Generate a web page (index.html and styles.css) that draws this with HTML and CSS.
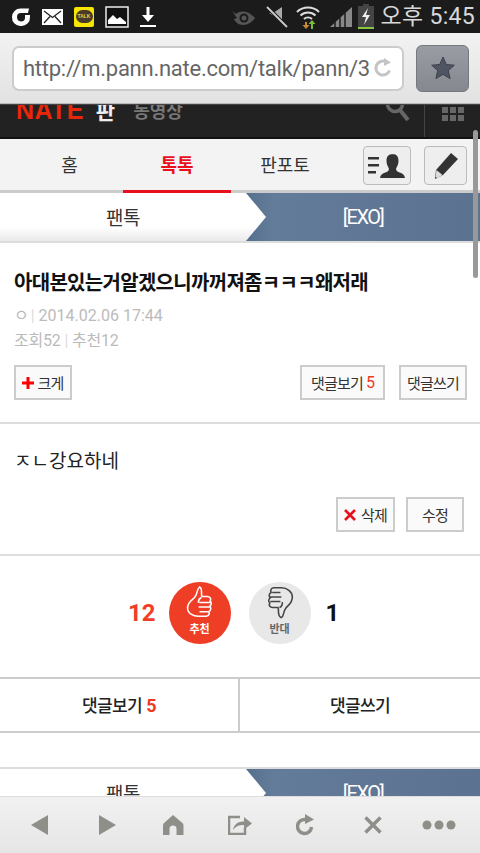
FILE: index.html
```html
<!DOCTYPE html>
<html lang="ko">

<head>
  <meta charset="UTF-8">
  <meta name="viewport" content="width=device-width, initial-scale=1.0">
  <title>네이트 판</title>
  <link rel="stylesheet" href="styles.css">
</head>

<body>
  <div class="status-bar">
    <div class="status-left">
      <svg width="20" height="20" viewBox="0 0 20 20"><path d="M18 1.500H9.500A8.500 8.500 0 0 0 1 10 8.500 8.500 0 0 0 10 19 8.500 8.500 0 0 0 19 10V8h-5v2.500A4 4 0 0 1 10 14.500 4.500 4.500 0 0 1 6 10 4 4 0 0 1 10 6h7Z" fill="#fff"/></svg>
      <svg width="21" height="16" viewBox="0 0 21 16"><rect width="21" height="16" fill="#fff"/><path d="M2 2l8.500 6.500L19 2M2 14l6-6.500M19 14l-6-6.500" fill="none" stroke="#222" stroke-width="1.300"/></svg>
      <div class="talk-icon"><span class="talk-bubble">TALK</span></div>
      <svg width="24" height="22" viewBox="0 0 24 22"><rect x="1" y="1" width="22" height="20" fill="#111" stroke="#eee" stroke-width="1.500"/><path d="M3 18v-4l5-5 4 4 3-2 6 5v2Z" fill="#fff"/></svg>
      <svg width="16" height="20" viewBox="0 0 16 20"><path d="M6.500 0h3v8H14l-6 7-6-7h4.500ZM0 18h16v2H0Z" fill="#fff"/></svg>
    </div>
    <div class="status-right">
      <svg class="eye" width="25" height="18" viewBox="0 0 25 18"><path d="M1 3l4 3C8 3.500 12 3 15 4c4 1 7 4 9 6-3 4-7 7-12 7-4 0-8-3-9-6l3-1C4 8 3 5 1 3Z" fill="#555"/><circle cx="13" cy="10" r="4.500" fill="#1b1b1b"/><circle cx="13" cy="10" r="2.500" fill="#555"/></svg>
      <svg class="mute" width="22" height="22" viewBox="0 0 22 22"><path d="M3 7h4l9-6v14ZM3 15V7" fill="#aaa"/><path d="M1 1l20 20" stroke="#1b1b1b" stroke-width="4"/><path d="M1 1l20 20" stroke="#ccc" stroke-width="1.800"/></svg>
      <svg width="24" height="24" viewBox="0 0 24 24"><path d="M1 7a16 16 0 0 1 22 0M4.500 10.500a11 11 0 0 1 15 0M8 14a6 6 0 0 1 8 0" fill="none" stroke="#ddd" stroke-width="2"/><path d="M9 17v3H6.500l3.500 4 3.500-4H11v-3Z" fill="#c98a2d"/><path d="M15 24v-5h-2.500L16 15l3.500 4H17v5Z" fill="#7dbb3c"/></svg>
      <svg class="signal" width="22" height="20" viewBox="0 0 22 20"><path d="M0 20L22 0V20Z" fill="#888"/><path d="M5 20V15M10 20V10.500M15 20V6" stroke="#1b1b1b" stroke-width="1.500"/></svg>
      <svg class="battery" width="16" height="25" viewBox="0 0 16 25"><path d="M5 0h6v2h5v21H0V2h5Z" fill="#444"/><path d="M0 23h16v2H0Z" fill="#8cc63f"/><path d="M10 4L4 13h4l-2 8 6-10H8Z" fill="#eee"/></svg>
      <span class="clock">오후 5:45</span>
    </div>
  </div>

  <div class="browser-bar">
    <div class="address">
      <span class="url">http://m.pann.nate.com/talk/pann/3</span>
      <svg width="20" height="20" viewBox="0 0 20 20"><path d="M16.500 12.500A7 7 0 1 1 13 3.800" fill="none" stroke="#c4c4c4" stroke-width="3"/><path d="M11 0l7 4.500-7 3.500Z" fill="#c4c4c4"/></svg>
    </div>
    <div class="star-btn">
      <svg width="24" height="24" viewBox="0 0 24 24"><path d="M12 1l3.300 7.500 8 .7-6 5.400 1.800 8L12 18.400 4.900 22.600l1.800-8-6-5.400 8-.7Z" fill="#4f5562" stroke="#3c404a"/></svg>
    </div>
  </div>

  <div class="page">
    <div class="scroll-thumb"></div>

    <header class="nate-header">
      <span class="logo">NATE</span>
      <span class="logo-pan">판</span>
      <span class="logo-video">동영상</span>
      <svg class="search-icon" width="26" height="26" viewBox="0 0 26 26"><circle cx="10" cy="8" r="7.500" fill="none" stroke="#666" stroke-width="3.500"/><path d="M15 14l8 10" stroke="#666" stroke-width="4"/></svg>
      <div class="grid-cell">
        <div class="grid-icon"><i></i><i></i><i></i><i></i><i></i><i></i></div>
      </div>
    </header>

    <nav class="tabs">
      <a class="tab">홈</a>
      <a class="tab active">톡톡</a>
      <a class="tab">판포토</a>
      <div class="tab-tools">
        <div class="tool-btn">
          <svg width="38" height="26" viewBox="0 0 38 26"><path d="M0 4h11v2.500H0ZM0 11h11v2.500H0ZM0 18h8v2.500H0Z" fill="#333"/><path d="M25 1c-5 0-6.500 3-6.500 7 0 4 2 6 2.500 8 0 2-2 3-5 4-2 1-3.500 2-4 5h25c-.5-3-2-4-4-5-3-1-5-2-5-4 .5-2 2.500-4 2.500-8 0-4-1.500-7-6-7Z" fill="#333"/></svg>
        </div>
        <div class="tool-btn pencil-btn">
          <svg width="26" height="28" viewBox="0 0 26 28"><path d="M18 1l7 6L10 23l-8 4 1-9Z" fill="#333"/><path d="M3.500 18l6 5-5 3-2-1Z" fill="#ddd"/></svg>
        </div>
      </div>
    </nav>

    <div class="crumb">
      <div class="crumb-left">팬톡</div>
      <div class="crumb-right">[EXO]</div>
    </div>

    <section class="post-head">
      <h1 class="title">아대본있는거알겠으니까꺼져좀ㅋㅋㅋ왜저래</h1>
      <p class="meta"><span class="author">ㅇ</span><span class="sep">|</span> 2014.02.06 17:44</p>
      <p class="meta stats">조회52 <span class="sep">|</span> 추천12</p>
      <div class="btn-row">
        <a class="btn bigger">
          <svg width="12" height="12" viewBox="0 0 12 12"><path d="M4.500 0h3v4.500H12v3H7.500V12h-3V7.500H0v-3h4.500Z" fill="#f00"/></svg>크게
        </a>
        <div class="btn-group">
          <a class="btn comments">댓글보기<b class="count">5</b></a>
          <a class="btn write">댓글쓰기</a>
        </div>
      </div>
    </section>

    <section class="post-body">
      <p class="body-text">ㅈㄴ강요하네</p>
      <div class="edit-row">
        <a class="btn del">
          <svg width="12" height="12" viewBox="0 0 12 12"><path d="M1 1l10 10M11 1L1 11" stroke="#e8101c" stroke-width="2.600"/></svg>삭제
        </a>
        <a class="btn edit">수정</a>
      </div>
    </section>

    <section class="vote">
      <span class="vote-num up">12</span>
      <div class="vote-circle good">
        <svg width="36" height="36" viewBox="0 0 36 36"><path d="M18 1.500c-3 1-1.500 6-5 10.500-3 4-8 5-8 12 0 6 6 9 12 9h8c3 0 4.500-3 3-5 2.500-1 3-4.500 1-6 2-1 2.500-4.500.5-5.500 1.500-2.500 0-5-3-5h-6c-1-4 1-9.500-2.500-10.500ZM18 18h12M17 23h13M18 28h10M20 12.500c-2 1-3.500 3-3 6" fill="none" stroke="#fff" stroke-width="1.700" stroke-linejoin="round"/></svg>
        <span class="vote-label">추천</span>
      </div>
      <div class="vote-circle bad">
        <svg width="36" height="36" viewBox="0 0 36 36"><path d="M20 34.500c3-1 1.500-6 5-10.500 3-4 7-5 7-12 0-6-6-10-12-10h-8c-3 0-4.500 3-3 5-2.500 1-3 4.500-1 6-2 1-2.500 4.500-.5 5.500C6 21 7.500 23.500 10.500 23.500h6c1 4-1 10 3.500 11ZM19 17H8M20 12H8M19 7H10M18 23.500c2-1 3.500-3 3-6" fill="none" stroke="#444" stroke-width="1.700" stroke-linejoin="round"/></svg>
        <span class="vote-label">반대</span>
      </div>
      <span class="vote-num down">1</span>
    </section>

    <div class="comment-bar">
      <a class="comment-link">댓글보기 <b class="count">5</b></a>
      <a class="comment-link">댓글쓰기</a>
    </div>

    <div class="crumb crumb-bottom">
      <div class="crumb-left">팬톡</div>
      <div class="crumb-right">[EXO]</div>
    </div>
  </div>

  <div class="bottom-bar">
    <svg width="18" height="20" viewBox="0 0 18 20"><path d="M17 0v20L0 10Z" fill="#8f8f8a"/></svg>
    <svg width="18" height="20" viewBox="0 0 18 20"><path d="M1 0v20l17-10Z" fill="#8f8f8a"/></svg>
    <svg width="22" height="20" viewBox="0 0 22 20"><path d="M11 0l10 8.500c.5 1 .5 2 .5 3V20h-7v-6a3.500 3.500 0 0 0-7 0v6H1v-8.500c0-1 0-2 .5-3Z" fill="#8f8f8a"/></svg>
    <svg width="24" height="20" viewBox="0 0 24 20"><path d="M12 2H1v17h16v-6" fill="none" stroke="#8f8f8a" stroke-width="2.500"/><path d="M5 15c1-6 5-8.500 11-8.500V2l8 6.500-8 6V10c-5 0-8 1-11 5Z" fill="#8f8f8a"/></svg>
    <svg width="20" height="22" viewBox="0 0 20 22"><path d="M15.500 13a7 7 0 1 1-6-7.500" fill="none" stroke="#8f8f8a" stroke-width="3.500"/><path d="M9 0l9 5.500L9 10Z" fill="#8f8f8a"/></svg>
    <svg width="18" height="18" viewBox="0 0 18 18"><path d="M1.500 1.500l15 15M16.500 1.500l-15 15" stroke="#8f8f8a" stroke-width="3.500"/></svg>
    <svg width="34" height="10" viewBox="0 0 34 10"><circle cx="5" cy="5" r="4.500" fill="#8f8f8a"/><circle cx="17" cy="5" r="4.500" fill="#8f8f8a"/><circle cx="29" cy="5" r="4.500" fill="#8f8f8a"/></svg>
  </div>
</body>

</html>
```

FILE: styles.css
```css
* {
  box-sizing: border-box;
}

html,
body {
  margin: 0;
  height: 853px;
  overflow: hidden;
}

body {
  display: flex;
  flex-direction: column;
  font-family: "Noto Sans CJK KR", Roboto, sans-serif;
  background-color: #fff;
  color: #333;
}

p,
h1 {
  margin: 0;
}

/* status bar */
.status-bar {
  height: 33px;
  flex: none;
  display: flex;
  justify-content: space-between;
  align-items: center;
  padding: 0 5px 0 11px;
  background-color: #1b1b1b;
}

.status-left,
.status-right {
  display: flex;
  align-items: center;
}

.status-left {
  gap: 11px;
}

.status-right {
  gap: 8px;
}

.eye {
  margin-right: 2px;
}

.signal {
  margin-left: 2px;
}

.battery {
  margin-left: -2px;
}

.talk-icon {
  width: 20px;
  height: 20px;
  display: flex;
  align-items: center;
  justify-content: center;
  border-radius: 2px;
  background-color: #f7e600;
}

.talk-bubble {
  width: 17px;
  height: 13px;
  border-radius: 7px;
  background-color: #4a3a2a;
  color: #e8d24a;
  font: bold 5px/13px "Liberation Sans", sans-serif;
  text-align: center;
}

.clock {
  margin-left: -1px;
  font-family: Roboto, "Noto Sans CJK KR", sans-serif;
  font-size: 23px;
  letter-spacing: 0.3px;
  line-height: 33px;
  color: #d8d8d8;
  white-space: nowrap;
}

/* browser bar */
.browser-bar {
  height: 71px;
  flex: none;
  display: flex;
  align-items: center;
  gap: 12px;
  padding: 0 11px 0 12px;
  background: linear-gradient(#f2f2f2, #e2e2e2);
  border-bottom: 1px solid #bbb;
}

.address {
  width: 392px;
  height: 45px;
  display: flex;
  align-items: center;
  gap: 3px;
  padding: 0 9px 0 9px;
  background-color: #fff;
  border: 2px solid #ccc;
  border-radius: 7px;
}

.url {
  flex: 1;
  overflow: hidden;
  white-space: nowrap;
  font-family: Roboto, sans-serif;
  font-size: 22px;
  letter-spacing: -0.25px;
  color: #666;
}

.star-btn {
  width: 53px;
  height: 47px;
  display: flex;
  align-items: center;
  justify-content: center;
  background: linear-gradient(#9a9ca3, #868890);
  border: 1px solid #77787e;
  border-radius: 6px;
}

/* page */
.page {
  position: relative;
  flex: 1;
  overflow: hidden;
  background-color: #fff;
}

.scroll-thumb {
  position: absolute;
  top: 26px;
  right: 2px;
  width: 5px;
  height: 148px;
  border-radius: 3px;
  background-color: #999;
  z-index: 2;
}

.nate-header {
  height: 35px;
  display: flex;
  align-items: flex-end;
  padding: 0 0 15px 16px;
  background-color: #222;
  border-top: 1px solid #444;
  border-bottom: 2px solid #111;
  overflow: hidden;
}

.logo {
  font: bold 25px/24px "Liberation Sans", sans-serif;
  color: #e8260a;
  letter-spacing: 0.4px;
}

.logo-pan {
  margin-left: 12px;
  font-size: 21px;
  line-height: 24px;
  font-weight: bold;
  color: #eee;
}

.logo-video {
  margin-left: 18px;
  font-size: 18px;
  line-height: 24px;
  font-weight: bold;
  color: #777;
}

.search-icon {
  margin-left: auto;
}

.grid-cell {
  align-self: stretch;
  margin: 0 16px -15px 13px;
  padding: 2px 0 0 17px;
  border-left: 1px solid #444;
}

.grid-icon {
  width: 22px;
  display: grid;
  grid-template-columns: repeat(3, 6px);
  gap: 2px;
}

.grid-icon i {
  height: 6px;
  background-color: #666;
}

.tabs {
  height: 54px;
  display: flex;
  align-items: stretch;
  padding-right: 13px;
  background-color: #f3f3f3;
  border-bottom: 3px solid #ccc;
}

.tab {
  width: 108px;
  margin-bottom: -3px;
  text-align: center;
  font-size: 18px;
  line-height: 50px;
  color: #333;
}

.tab:first-child {
  width: 123px;
  padding-left: 16px;
}

.tab.active {
  font-weight: bold;
  color: #e8101c;
  border-bottom: 3px solid #e8101c;
}

.tab-tools {
  margin-left: auto;
  display: flex;
  gap: 13px;
  padding-top: 7px;
}

.tool-btn {
  width: 48px;
  height: 39px;
  display: flex;
  align-items: center;
  justify-content: center;
  background-color: #eee;
  border: 1px solid #bbb;
  border-radius: 4px;
}

.pencil-btn {
  width: 43px;
}

.crumb {
  position: relative;
  height: 50px;
  display: flex;
  border-bottom: 2px solid #ddd;
}

.crumb-left {
  width: 246px;
  text-align: center;
  font-size: 19px;
  line-height: 48px;
  letter-spacing: -0.5px;
  background: linear-gradient(#fff 70%, #eaeaea);
}

.crumb-left::after {
  content: "";
  position: absolute;
  left: 246px;
  top: 0;
  width: 20px;
  height: 48px;
  background: linear-gradient(#fff 70%, #eaeaea);
  clip-path: polygon(0 0, 100% 50%, 0 100%);
  z-index: 1;
}

.crumb-right {
  flex: 1;
  text-align: center;
  font-family: Roboto, sans-serif;
  font-size: 20px;
  line-height: 48px;
  letter-spacing: -1.5px;
  color: #fff;
  background: linear-gradient(90deg, #55708f 0, #637c99 12%, #5b7290 100%);
}

.post-head {
  padding: 24px 13px 0 14px;
  height: 181px;
  border-bottom: 2px solid #ddd;
}

.title {
  font-size: 20px;
  line-height: 30px;
  font-weight: bold;
  letter-spacing: -0.7px;
  color: #111;
  white-space: nowrap;
}

.meta {
  margin-top: 7px;
  font-family: Roboto, "Noto Sans CJK KR", sans-serif;
  font-size: 16px;
  line-height: 24px;
  color: #bbb;
}

.meta .sep {
  color: #ddd;
}

.author {
  margin-right: 2px;
}

.stats {
  margin-top: 1px;
  letter-spacing: -0.2px;
}

.btn-row {
  display: flex;
  justify-content: space-between;
  margin-top: 12px;
}

.btn-group {
  display: flex;
  gap: 14px;
}

.btn {
  height: 35px;
  display: flex;
  align-items: center;
  justify-content: center;
  gap: 3px;
  font-size: 15px;
  letter-spacing: -0.8px;
  color: #333;
  background-color: #fafafa;
  border: 2px solid #ccc;
}

.bigger {
  width: 58px;
}

.comments {
  width: 85px;
}

.write {
  width: 68px;
}

.count {
  font-family: Roboto, sans-serif;
  font-weight: 400;
  font-size: 16px;
  color: #f03a1f;
}

.post-body {
  height: 132px;
  padding: 21px 16px 0 14px;
  border-bottom: 2px solid #ddd;
}

.body-text {
  font-size: 19px;
  line-height: 30px;
  color: #222;
}

.edit-row {
  display: flex;
  justify-content: flex-end;
  gap: 11px;
  margin-top: 22px;
}

.del {
  width: 59px;
  gap: 5px;
}

.edit {
  width: 58px;
}

.vote {
  height: 121px;
  display: flex;
  align-items: center;
  padding-left: 128px;
  padding-bottom: 7px;
}

.vote-num {
  font-family: Roboto, sans-serif;
  font-size: 24px;
  font-weight: bold;
}

.up {
  color: #ef3e26;
  margin-right: 13px;
}

.down {
  color: #111;
  margin-left: 15px;
}

.vote-circle {
  width: 62px;
  height: 62px;
  display: flex;
  flex-direction: column;
  align-items: center;
  border-radius: 50%;
  padding-top: 4px;
}

.vote-circle svg {
  width: 33px;
  height: 33px;
}

.good {
  background-color: #ef3e26;
  margin-right: 18px;
}

.bad {
  background-color: #e8e8e8;
}

.vote-label {
  font-size: 11px;
  line-height: 14px;
  font-weight: bold;
  color: #fff;
  margin-top: 2px;
}

.bad .vote-label {
  color: #666;
}

.comment-bar {
  height: 56px;
  display: grid;
  grid-template-columns: 240px 1fr;
  border-top: 2px solid #ccc;
  border-bottom: 2px solid #ccc;
}

.comment-link {
  text-align: center;
  font-size: 17px;
  line-height: 52px;
  font-weight: 500;
  letter-spacing: -0.6px;
  color: #222;
}

.comment-link:first-child {
  border-right: 2px solid #ccc;
}

.comment-link .count {
  font-weight: bold;
  font-size: 18px;
}

.crumb-bottom {
  margin-top: 34px;
  border-top: 2px solid #ddd;
}

/* bottom toolbar */
.bottom-bar {
  height: 57px;
  flex: none;
  display: grid;
  grid-template-columns: repeat(7, 66.5px);
  justify-items: center;
  align-items: center;
  padding-left: 7px;
  background: linear-gradient(#f1f1f1, #e6e6e6);
  border-top: 1px solid #ddd;
}
```
